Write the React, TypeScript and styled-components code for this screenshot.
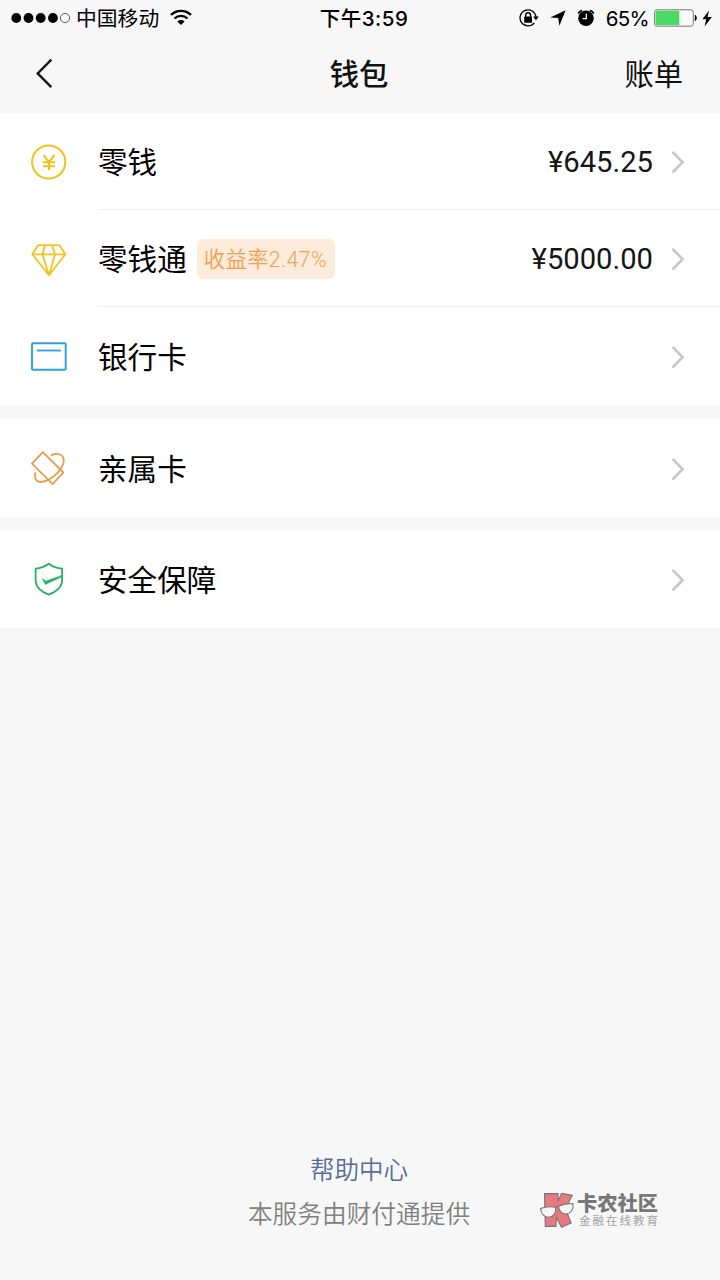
import React from 'react';
import styled, { createGlobalStyle } from 'styled-components';

const GlobalStyle = createGlobalStyle`
  * { box-sizing: border-box; }
  body {
    margin: 0;
    background: #f7f7f7;
    color: #111;
    font-family: Inter, "Noto Sans CJK SC", sans-serif;
  }
  svg { display: block; flex: none; }
`;

const Page = styled.div`
  width: 720px;
  height: 1280px;
  display: flex;
  flex-direction: column;
  background: #f7f7f7;
  overflow: hidden;
`;

const StatusBar = styled.div`
  height: 36px;
  flex: none;
  display: grid;
  grid-template-columns: 1fr auto 1fr;
  align-items: center;
  padding: 0 7px 0 11px;
  color: #000;
  font-size: 21px;
  line-height: 34px;
`;

const StatusSide = styled.div<{ $end?: boolean }>`
  display: flex;
  align-items: center;
  justify-content: ${(p) => (p.$end ? 'flex-end' : 'flex-start')};
`;

const Carrier = styled.span`
  margin: 0 11px 0 6px;
  padding-top: 2px;
  font-size: 20.8px;
`;

const Clock = styled.span`
  padding: 2px 0 0 4px;
  font-size: 20.5px;
  font-weight: 500;
  letter-spacing: 0.5px;
`;

const Percent = styled.span`
  margin: 0 5px 0 11px;
  padding-top: 2px;
  font-size: 20.5px;
  letter-spacing: -0.7px;
`;

const NavBar = styled.header`
  height: 77px;
  flex: none;
  display: grid;
  grid-template-columns: 1fr auto 1fr;
  align-items: center;
  padding: 0 37px 2px 35px;
  font-size: 29.3px;
  line-height: 44px;
`;

const Title = styled.h1`
  margin: 0;
  padding-top: 3px;
  font-size: inherit;
  font-weight: 500;
`;

const Bills = styled.span`
  justify-self: end;
  padding-top: 3px;
`;

const Group = styled.section<{ $gap?: number }>`
  flex: none;
  margin-bottom: ${(p) => p.$gap ?? 0}px;
  background: #fff;
`;

const Row = styled.div<{ $height: number }>`
  height: ${(p) => p.$height}px;
  display: flex;
  padding-left: 30px;
`;

const IconSlot = styled.div`
  width: 68px;
  display: flex;
  align-items: center;
`;

const RowBody = styled.div<{ $divided?: boolean }>`
  flex: 1;
  display: flex;
  align-items: center;
  padding: 2px 34px 0 0;
  border-bottom: ${(p) => (p.$divided ? '1px solid #f0f0f0' : 'none')};
`;

const Label = styled.span`
  font-size: 29.6px;
  line-height: 44px;
  color: #000;
`;

const Badge = styled.span`
  height: 40px;
  margin-left: 10px;
  padding: 0 8px 0 7px;
  border-radius: 6px;
  background: #fdebdb;
  color: #eea04f;
  font-family: Roboto, "Noto Sans CJK SC", sans-serif;
  font-size: 21.4px;
  font-weight: 350;
  letter-spacing: 0.3px;
  line-height: 41px;
`;

const Amount = styled.span`
  font-family: Roboto, sans-serif;
  font-size: 29.2px;
  line-height: 44px;
  color: #161616;
`;

const Trailing = styled.div`
  margin-left: auto;
  display: flex;
  align-items: center;
  gap: 17px;
`;

const Footer = styled.footer`
  margin-top: auto;
  height: 131px;
  flex: none;
  display: grid;
  grid-template-columns: 1fr auto 1fr;
  padding-right: 2px;
`;

const FooterText = styled.div`
  grid-column: 2;
  display: flex;
  flex-direction: column;
  align-items: center;
  font-size: 24.7px;
  font-weight: 350;
  line-height: 43.5px;
  color: #808080;
`;

const HelpLink = styled.a`
  font-size: 24.5px;
  color: #576b95;
`;

const Watermark = styled.div`
  display: flex;
  align-items: flex-start;
  padding: 42px 0 0 70px;
  gap: 1px;
`;

const WatermarkText = styled.div`
  display: flex;
  flex-direction: column;
  white-space: nowrap;
`;

const WatermarkName = styled.span`
  padding-top: 2px;
  font-size: 20.2px;
  font-weight: 900;
  line-height: 22px;
  color: #777;
`;

const WatermarkTag = styled.span`
  padding-left: 2px;
  font-size: 11.5px;
  line-height: 13px;
  letter-spacing: 2px;
  color: #a2a2a2;
`;

const SignalIcon = () => (
  <svg width="59" height="12" viewBox="0 0 59 12">
    {[5.3, 17.5, 29.7, 41.9].map((x) => (
      <circle key={x} cx={x} cy="6" r="4.9" fill="#000" />
    ))}
    <circle cx="54" cy="6" r="4.6" fill="none" stroke="#222" strokeWidth="0.7" />
  </svg>
);

const WifiIcon = () => (
  <svg width="22" height="18" viewBox="0 0 22 18">
    <g fill="none" stroke="#000" strokeWidth="2.3">
      <path d="M1 5.9a14.2 14.2 0 0 1 20 0" />
      <path d="M4.5 9.5a9.2 9.2 0 0 1 13 0" />
    </g>
    <path d="M7.4 12.4a5.1 5.1 0 0 1 7.2 0L11 16z" fill="#000" />
  </svg>
);

const RotationLockIcon = () => (
  <svg width="20" height="18" viewBox="0 0 20 18">
    <path d="M15.3 13.9A8 8 0 1 1 17 8" fill="none" stroke="#000" strokeWidth="1.3" />
    <path d="M14.1 7.6h5.7L17 11.2z" />
    <rect x="5.2" y="7.6" width="7.8" height="6.2" rx="0.6" />
    <path d="M6.7 8.4V6.1a2.4 2.4 0 0 1 4.8 0v2.1" fill="none" stroke="#000" strokeWidth="1.4" />
  </svg>
);

const LocationIcon = () => (
  <svg width="16" height="16" viewBox="0 0 16 16">
    <path d="M15.6.3 9.4 15.8 8.2 8 .3 7.6z" />
  </svg>
);

const AlarmIcon = () => (
  <svg width="18" height="18" viewBox="0 0 18 18">
    <circle cx="9" cy="9.2" r="7.8" />
    <path d="M1.2 4.4A9 9 0 0 1 5 1.2M16.8 4.4A9 9 0 0 0 13 1.2" fill="none" stroke="#000" strokeWidth="1.8" />
    <path d="M9.3 4.7v5H5.6" fill="none" stroke="#f7f7f7" strokeWidth="1.3" />
  </svg>
);

const BatteryIcon = () => (
  <svg width="43" height="18" viewBox="0 0 43 18">
    <rect x="0.6" y="0.8" width="38.7" height="16.4" rx="2.5" fill="#fafafa" stroke="#777" strokeWidth="1" />
    <path d="M3 1.8h22.3v14.4H3a1.4 1.4 0 0 1-1.4-1.4V3.2A1.4 1.4 0 0 1 3 1.8z" fill="#4cd964" />
    <path d="M40.8 5.7c2.6.8 2.6 5.8 0 6.6z" />
  </svg>
);

const BoltIcon = () => (
  <svg width="11" height="17" viewBox="0 0 11 17">
    <path d="M7 .4.4 9.3h3.8L2.6 16.6 9.9 7H5.6z" />
  </svg>
);

const BackIcon = () => (
  <svg width="20" height="30" viewBox="0 0 20 30">
    <path d="M16.3.6 2.7 14.4 16.3 28.2" fill="none" stroke="#151515" strokeWidth="2.4" />
  </svg>
);

const ChevronIcon = () => (
  <svg width="16" height="24" viewBox="0 0 16 24">
    <path d="m2.5 1.9 10.1 10.3L2.5 22.5" fill="none" stroke="#c6c6c8" strokeWidth="2.6" />
  </svg>
);

const CoinIcon = () => (
  <svg width="38" height="38" viewBox="0 0 38 38" fill="none" stroke="#f1c21c" strokeWidth="2">
    <circle cx="18.7" cy="19" r="16.6" />
    <path d="m13.7 12.2 5.3 7 5.3-7M19 19v8M12.9 19.3h12.2M12.9 23.2h12.2" />
  </svg>
);

const DiamondIcon = () => (
  <svg width="38" height="38" viewBox="0 0 38 38" fill="none" stroke="#f0c41e" strokeWidth="1.8" strokeLinejoin="round">
    <path d="M8.3 5.2h21.2l5.9 9.1L19 35.2 2.2 14.3zM2.2 14.3h33.2M15.1 5.2l-2.7 9.1L19 35.2l6-20.9-2.9-9.1" />
  </svg>
);

const CardIcon = () => (
  <svg width="38" height="38" viewBox="0 0 38 38" fill="none" stroke="#2ba3dc" strokeWidth="1.9">
    <rect x="2" y="6.2" width="33.7" height="26.6" rx="0.8" />
    <path d="M6.8 13.5h24.1" />
  </svg>
);

const FamilyCardIcon = () => (
  <svg width="38" height="38" viewBox="0 0 38 38" fill="none" stroke="#eb9c4b" strokeWidth="1.8" strokeLinejoin="round">
    <path d="M12.8 3.2 2 14.7l20.6 20.4 10.7-11.6z" />
    <path d="M20.8 6.3C26.8 3.8 31.4 4.9 33.1 8.2c1.8 4-.3 9.8-5 15.1C22.2 29.6 14.2 33.6 9.7 32.9 5.6 32.2 4.2 28.5 5.2 23.4" />
  </svg>
);

const ShieldIcon = () => (
  <svg width="38" height="38" viewBox="0 0 38 38" fill="none" stroke="#2aae67" strokeWidth="1.8" strokeLinejoin="round">
    <path d="M18.7 3.7c4.1 3 8.5 4.5 13.4 5v11.5c0 6.5-5.8 11.9-13.4 14.5C11.1 32.1 5.6 26.7 5.6 20.2V8.7c4.9-.5 9-2 13.1-5z" />
    <path d="m12.2 18.4 3.6 2.6L32 15.4v1.4l-16.6 7.6z" fill="#2aae67" strokeWidth="0.5" />
  </svg>
);

const MascotIcon = () => (
  <svg width="36" height="38" viewBox="0 0 36 38">
    <g fill="#e77a80" stroke="#777" strokeWidth="1.1" strokeLinejoin="round">
      <path d="M4.500 2.600h13.500v7.600l3.600-8 10.700 2.200-7 13.100 5.900 14.500-9.700 4.200-5.200-9.800-.3 9H5.300z" />
    </g>
    <g fill="#f7f5f5" stroke="#777" strokeWidth="1.1">
      <path d="M.6 17.4c4.600-1.700 10-2 15-1.100 1 5.400-2 9.600-6.400 9.900-4.700.3-8-3.200-8.600-8.800z" />
      <path d="M18.500 15.200c4.400-2.200 9.600-3 14.500-2.300.6 5.400-2 9.600-6.300 10-4.400.4-7.700-2.700-8.200-7.700z" />
      <path d="m15.600 16.300 2.900-1.100" fill="none" />
    </g>
  </svg>
);

interface WalletRowProps {
  icon: React.ReactNode;
  label: string;
  height?: number;
  badge?: string;
  amount?: string;
  divided?: boolean;
}

const WalletRow = ({ icon, label, height = 98, badge, amount, divided }: WalletRowProps) => (
  <Row $height={height}>
    <IconSlot>{icon}</IconSlot>
    <RowBody $divided={divided}>
      <Label>{label}</Label>
      {badge && <Badge>{badge}</Badge>}
      <Trailing>
        {amount && <Amount>{amount}</Amount>}
        <ChevronIcon />
      </Trailing>
    </RowBody>
  </Row>
);

const StatusIcons = styled.div`
  display: flex;
  align-items: center;
  gap: 11px;
`;

const BatteryGroup = styled.div`
  display: flex;
  align-items: center;
  gap: 5px;
`;

export default function App() {
  return (
    <Page>
      <GlobalStyle />
      <StatusBar>
        <StatusSide>
          <SignalIcon />
          <Carrier>中国移动</Carrier>
          <WifiIcon />
        </StatusSide>
        <Clock>下午3:59</Clock>
        <StatusSide $end>
          <StatusIcons>
            <RotationLockIcon />
            <LocationIcon />
            <AlarmIcon />
          </StatusIcons>
          <Percent>65%</Percent>
          <BatteryGroup>
            <BatteryIcon />
            <BoltIcon />
          </BatteryGroup>
        </StatusSide>
      </StatusBar>
      <NavBar>
        <BackIcon />
        <Title>钱包</Title>
        <Bills>账单</Bills>
      </NavBar>
      <Group $gap={14}>
        <WalletRow icon={<CoinIcon />} label="零钱" amount="¥645.25" height={97} divided />
        <WalletRow icon={<DiamondIcon />} label="零钱通" badge="收益率2.47%" amount="¥5000.00" height={97} divided />
        <WalletRow icon={<CardIcon />} label="银行卡" />
      </Group>
      <Group $gap={13}>
        <WalletRow icon={<FamilyCardIcon />} label="亲属卡" />
      </Group>
      <Group>
        <WalletRow icon={<ShieldIcon />} label="安全保障" />
      </Group>
      <Footer>
        <FooterText>
          <HelpLink>帮助中心</HelpLink>
          <span>本服务由财付通提供</span>
        </FooterText>
        <Watermark>
          <MascotIcon />
          <WatermarkText>
            <WatermarkName>卡农社区</WatermarkName>
            <WatermarkTag>金融在线教育</WatermarkTag>
          </WatermarkText>
        </Watermark>
      </Footer>
    </Page>
  );
}
